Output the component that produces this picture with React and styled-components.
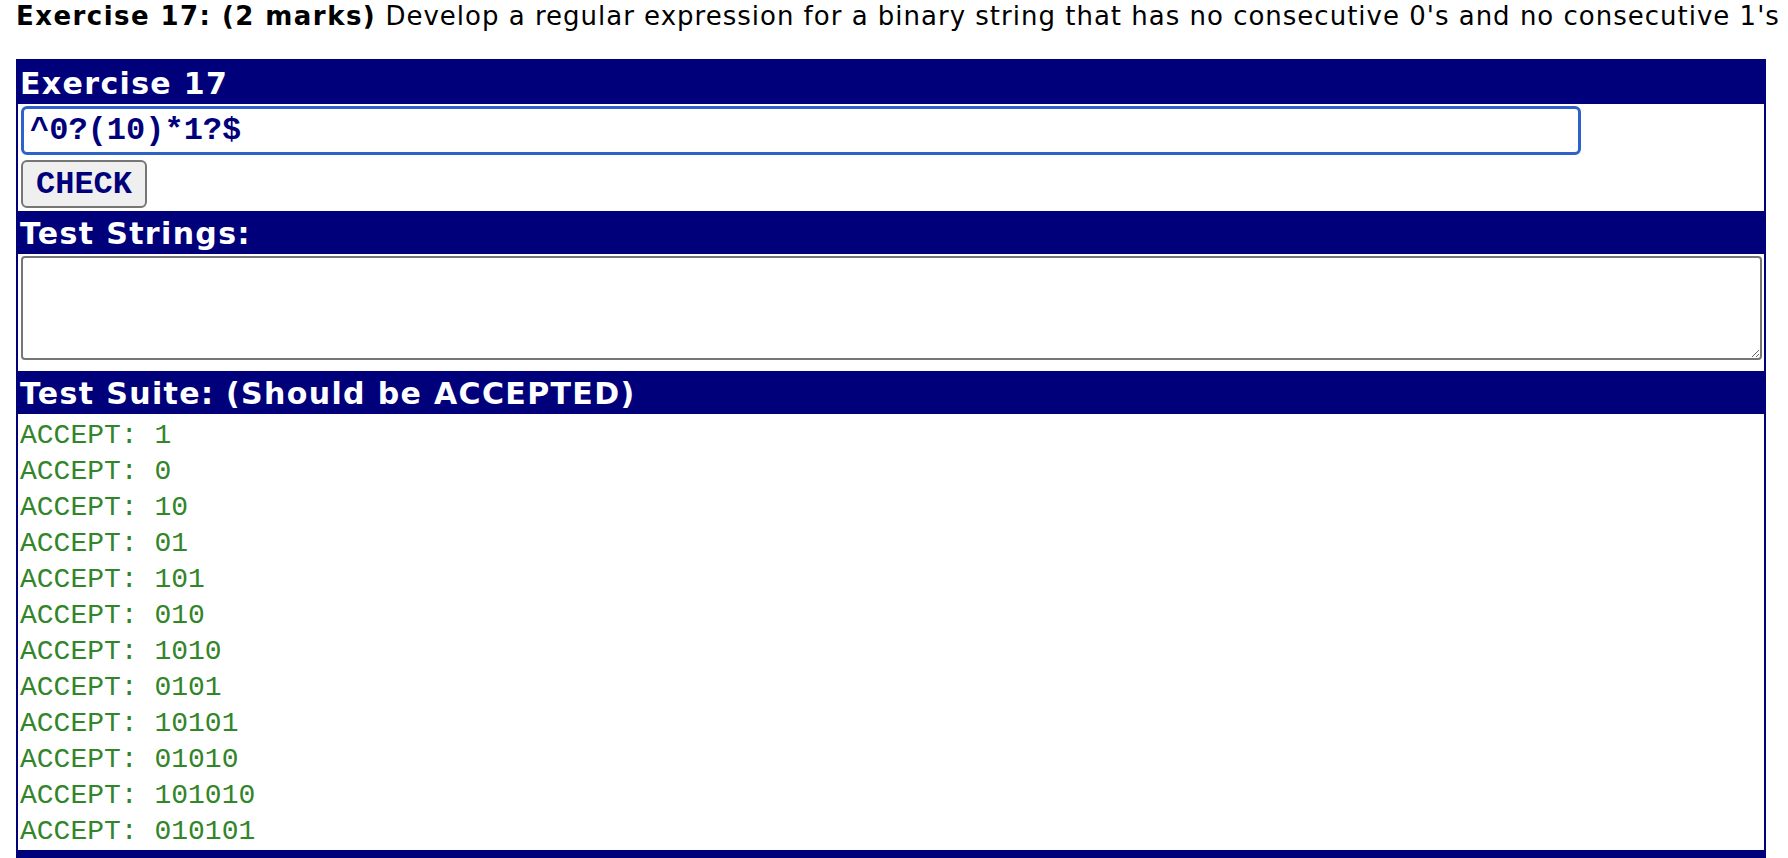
import React from "react";
import styled, { createGlobalStyle } from "styled-components";

const NAVY = "#00007b";
const ACCEPTED = ["1", "0", "10", "01", "101", "010", "1010", "0101", "10101", "01010", "101010", "010101"];

const GlobalStyle = createGlobalStyle`
  html, body {
    margin: 0;
    padding: 0;
    background: #fff;
  }
`;

const Page = styled.div`
  padding: 0 22px 0 16px;
  font-family: "DejaVu Sans", Verdana, sans-serif;
`;

const Question = styled.p`
  margin: 0 0 27px;
  padding-top: 1px;
  font-size: 26px;
  line-height: 31px;
  letter-spacing: 1px;
  color: #000;
  white-space: nowrap;

  b {
    font-weight: bold;
    letter-spacing: 1.45px;
  }
`;

const Panel = styled.section`
  border: 2px solid ${NAVY};
  border-bottom: none;
  display: flex;
  flex-direction: column;
`;

const Band = styled.h2`
  margin: 0;
  min-height: 37px;
  background: ${NAVY};
  color: #fff;
  font-size: 30px;
  font-weight: bold;
  line-height: 37px;
  letter-spacing: 1.35px;
  padding: 4px 2px 2px;
`;

const Cell = styled.div`
  display: flex;
  flex-direction: column;
  align-items: flex-start;
  gap: ${(p) => p.$gap || 0}px;
  padding: ${(p) => p.$pad || "2px 2px 3px"};
`;

const RegexInput = styled.input`
  box-sizing: border-box;
  width: 1560px;
  height: 49px;
  margin: 0 0 0 1px;
  padding: 0 6px;
  border: 3px solid #2f62c8;
  border-radius: 6px;
  outline: none;
  background: #fff;
  color: ${NAVY};
  font-family: "Liberation Mono", "Courier New", monospace;
  font-weight: bold;
  font-size: 32px;
`;

const CheckButton = styled.button`
  box-sizing: border-box;
  height: 48px;
  margin-left: 1px;
  padding: 0 13px;
  border: 2px solid #767676;
  border-radius: 6px;
  background: #efefef;
  color: ${NAVY};
  font-family: "Liberation Mono", "Courier New", monospace;
  font-weight: bold;
  font-size: 32px;
`;

const TestArea = styled.textarea`
  box-sizing: border-box;
  display: block;
  width: calc(100% - 1px);
  height: 104px;
  margin: 0 0 0 1px;
  border: 2px solid #767676;
  border-radius: 4px;
  background: #fff;
  resize: both;
`;

const SuiteList = styled.div`
  padding: 4px 2px 0;
  font-family: "Liberation Mono", "Courier New", monospace;
  font-size: 28px;
  line-height: 36px;
  color: #33852a;
`;

const SuiteLine = styled.div`
  white-space: pre;
`;

export default function App() {
  return (
    <>
      <GlobalStyle />
      <Page>
        <Question>
          <b>Exercise 17: (2 marks)</b> Develop a regular expression for a binary string that has no
          consecutive 0's and no consecutive 1's
        </Question>
        <Panel>
          <Band>Exercise 17</Band>
          <Cell $gap={5}>
            <RegexInput defaultValue="^0?(10)*1?$" spellCheck={false} />
            <CheckButton>CHECK</CheckButton>
          </Cell>
          <Band>Test Strings:</Band>
          <Cell $pad="2px 2px 11px">
            <TestArea />
          </Cell>
          <Band>Test Suite: (Should be ACCEPTED)</Band>
          <SuiteList>
            {ACCEPTED.map((s) => (
              <SuiteLine key={s}>ACCEPT: {s}</SuiteLine>
            ))}
          </SuiteList>
          <Band />
        </Panel>
      </Page>
    </>
  );
}
